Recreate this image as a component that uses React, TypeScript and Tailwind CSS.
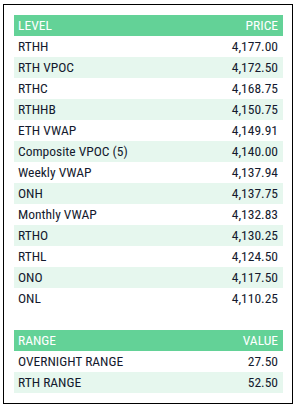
const levels: [string, string][] = [
  ["RTHH", "4,177.00"],
  ["RTH VPOC", "4,172.50"],
  ["RTHC", "4,168.75"],
  ["RTHHB", "4,150.75"],
  ["ETH VWAP", "4,149.91"],
  ["Composite VPOC (5)", "4,140.00"],
  ["Weekly VWAP", "4,137.94"],
  ["ONH", "4,137.75"],
  ["Monthly VWAP", "4,132.83"],
  ["RTHO", "4,130.25"],
  ["RTHL", "4,124.50"],
  ["ONO", "4,117.50"],
  ["ONL", "4,110.25"],
];

const ranges: [string, string][] = [
  ["OVERNIGHT RANGE", "27.50"],
  ["RTH RANGE", "52.50"],
];

function Table({ head, rows }: { head: [string, string]; rows: [string, string][] }) {
  return (
    <table className="w-full border-collapse text-[13.5px] leading-[21px]">
      <thead>
        <tr className="bg-[#63d297] text-white">
          <th className="h-[21px] pl-1 text-left font-normal">{head[0]}</th>
          <th className="h-[21px] pr-[5px] text-right font-normal">{head[1]}</th>
        </tr>
      </thead>
      <tbody>
        {rows.map(([k, v], i) => (
          <tr key={k} className={i % 2 === 1 ? "bg-[#e6f7ee]" : "bg-white"}>
            <td className="h-[21px] pl-1 text-left">{k}</td>
            <td className="h-[21px] pr-[5px] text-right">{v}</td>
          </tr>
        ))}
      </tbody>
    </table>
  );
}

export default function App() {
  return (
    <div className="w-[297px] h-[408px] bg-white pt-[4px] pl-[3px]">
      <div
        className="w-[290px] h-[400px] border border-black pt-[10px] pl-[10px] pr-[9px] text-[#141a2e]"
        style={{ fontFamily: '"Ubuntu Condensed", "Roboto Condensed", "DejaVu Sans Condensed", sans-serif' }}
      >
        <Table head={["LEVEL", "PRICE"]} rows={levels} />
        <div className="h-[21px]" />
        <Table head={["RANGE", "VALUE"]} rows={ranges} />
      </div>
    </div>
  );
}
